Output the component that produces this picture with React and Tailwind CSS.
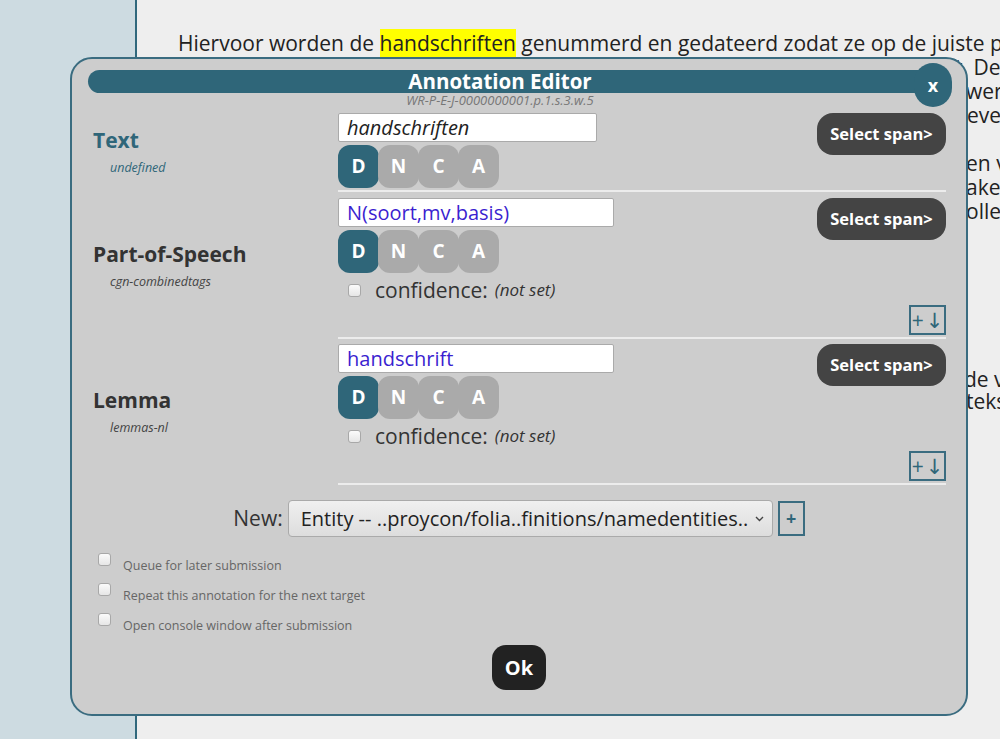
import React from 'react';

const FONT = { fontFamily: '"Open Sans", "DejaVu Sans", sans-serif' };

// only the line ends that stick out to the right of the dialog are visible
const bgLines = [
  { w: 'w-[770px]', tail: 'ft.  De brieven' },
  { w: 'w-[788px]', tail: 'werken' },
  { w: 'w-[789px]', tail: 'eventueel' },
  { w: 'w-[788px]', tail: '' },
  { w: 'w-[788px]', tail: 'en v' },
  { w: 'w-[788px]', tail: 'aken' },
  { w: 'w-[788px]', tail: 'ollectie' },
  { w: 'w-[788px]', tail: '' },
  { w: 'w-[788px]', tail: '' },
  { w: 'w-[788px]', tail: '' },
  { w: 'w-[788px]', tail: '' },
  { w: 'w-[788px]', tail: '' },
  { w: 'w-[788px]', tail: '' },
  { w: 'w-[786px]', tail: 'de v', h: 'h-[22px]' },
  { w: 'w-[788px]', tail: 'teks', h: 'h-[22px]' },
];

function Checkbox({ className = '' }) {
  return (
    <span className={`inline-block shrink-0 w-[13px] h-[13px] rounded-[3px] border border-[#a8a8a8] bg-gradient-to-b from-[#fbfbfb] to-[#e6e6e6] ${className}`} />
  );
}

function Dnca() {
  return (
    <div className="flex mt-[3px]">
      {['D', 'N', 'C', 'A'].map((l, i) => (
        <div
          key={l}
          className={`w-[41px] h-[43px] rounded-[12px] flex items-center justify-center text-white font-bold text-[19px] ${i === 0 ? 'bg-[#2f6679]' : 'bg-[#aaaaaa] -ml-[1px]'}`}
        >
          {l}
        </div>
      ))}
    </div>
  );
}

function SelectSpan() {
  return (
    <div className="w-[129px] h-[42px] rounded-[16px] bg-[#444444] text-white font-bold text-[16.5px] flex items-center justify-center">
      Select span&gt;
    </div>
  );
}

function PlusDown() {
  return (
    <div className="self-end w-[37px] h-[30px] border-2 border-[#3a6c80] flex items-center justify-center text-[#2f6679] text-[21px] leading-none">
      +<span className="ml-[2px]">↓</span>
    </div>
  );
}

function Confidence({ className = '' }) {
  return (
    <div className={`flex items-center h-[22px] pl-[10px] ${className}`}>
      <Checkbox />
      <span className="ml-[14px] text-[21px] leading-[22px] text-[#333]">confidence:</span>
      <span className="ml-[7px] text-[17px] leading-[22px] italic text-[#333]">(not set)</span>
    </div>
  );
}

function Row({ label, set, labelColor, setColor, input, inputW, inputItalic, inputColor, first, pt }) {
  return (
    <div className="flex">
      <div className="w-[266px] shrink-0 pl-[21px] flex flex-col justify-center">
        <div className={`text-[21px] font-bold leading-[24px] ${labelColor}`}>{label}</div>
        <div className={`pl-[17px] mt-[8px] text-[12.5px] italic leading-[16px] ${setColor}`}>{set}</div>
      </div>
      <div className={`w-[608px] flex flex-col border-b-2 border-[#ececec] pb-[2px] ${pt}`}>
        <div className="flex justify-between items-start">
          <div className="flex flex-col">
            <div className={`h-[29px] ${inputW} bg-white border border-[#aaaaaa] rounded-[2px] px-[8px] flex items-center text-[20px] leading-[27px] ${inputItalic ? 'italic' : ''} ${inputColor}`}>
              {input}
            </div>
            <Dnca />
          </div>
          <SelectSpan />
        </div>
        {!first && (
          <>
            <Confidence className="mt-[6px]" />
            <div className="flex justify-end mt-[4px]">
              <PlusDown />
            </div>
          </>
        )}
      </div>
    </div>
  );
}

export default function App() {
  return (
    <div className="relative w-[1000px] h-[739px] overflow-hidden flex bg-[#eeeeee]" style={FONT}>
      <div className="w-[137px] shrink-0 bg-[#cddbe1] border-r-2 border-[#30687c]" />
      <div className="flex-1 pl-[41px] pt-[31px] text-[21px] leading-[24px] text-[#222] overflow-hidden">
        <div className="whitespace-nowrap">
          Hiervoor worden de <span className="bg-[#ffff00]">handschriften</span> genummerd en gedateerd zodat ze op de juiste plaats
        </div>
        {bgLines.map((l, i) => (
          <div key={i} className={`flex whitespace-nowrap ${l.h || 'h-[24px]'}`}>
            <span className={`${l.w} shrink-0`} />
            <span>{l.tail}</span>
          </div>
        ))}
      </div>

      {/* Annotation editor dialog */}
      <div className="absolute left-[70px] top-[57px] w-[898px] h-[659px] rounded-[22px] border-2 border-[#3a6c80] bg-[#cdcdcd] flex flex-col">
        <div className="relative mt-[11px] mx-[16px] h-[23px] rounded-full bg-[#2f6679] pr-[38px] flex items-center justify-center">
          <span className="text-white font-bold text-[20.5px] leading-none">Annotation Editor</span>
          <div className="absolute right-[-2px] top-[-7px] w-[38px] h-[44px] rounded-[20px] bg-[#2f6679] flex items-center justify-center text-white font-bold text-[18px]">
            x
          </div>
        </div>
        <div className="pr-[38px] text-center text-[13px] leading-[14px] italic text-[#777] mb-[5px]">
          WR-P-E-J-0000000001.p.1.s.3.w.5
        </div>

        <Row
          first
          pt="pt-[1px]"
          label="Text"
          set="undefined"
          labelColor="text-[#2f6679]"
          setColor="text-[#2f6679]"
          input="handschriften"
          inputW="w-[259px]"
          inputItalic
          inputColor="text-[#222]"
        />
        <Row
          pt="pt-[6px]"
          label="Part-of-Speech"
          set="cgn-combinedtags"
          labelColor="text-[#333]"
          setColor="text-[#444]"
          input="N(soort,mv,basis)"
          inputW="w-[276px]"
          inputColor="text-[#3b1fd0]"
        />
        <Row
          pt="pt-[5px]"
          label="Lemma"
          set="lemmas-nl"
          labelColor="text-[#333]"
          setColor="text-[#444]"
          input="handschrift"
          inputW="w-[276px]"
          inputColor="text-[#3b1fd0]"
        />

        <div className="mt-[15px] flex items-center justify-center h-[37px]">
          <span className="text-[21px] text-[#333] mr-[5px]">New:</span>
          <div className="w-[485px] h-[37px] rounded-[4px] border border-[#aaaaaa] bg-gradient-to-b from-[#f0f0f0] to-[#dddddd] flex items-center pl-[12px] pr-[8px] text-[20px] text-[#222]">
            <span className="flex-1 whitespace-nowrap overflow-hidden">Entity -- ..proycon/folia..finitions/namedentities..</span>
            <svg width="9" height="6" viewBox="0 0 9 6" className="ml-[6px]">
              <path d="M1 1 L4.5 4.5 L8 1" fill="none" stroke="#444" strokeWidth="1.4" />
            </svg>
          </div>
          <div className="ml-[5px] w-[27px] h-[35px] border-2 border-[#3a6c80] flex items-center justify-center text-[#2f6679] font-bold text-[18px]">
            +
          </div>
        </div>

        <div className="mt-[14px] pl-[26px] flex flex-col">
          {['Queue for later submission', 'Repeat this annotation for the next target', 'Open console window after submission'].map((t) => (
            <div key={t} className="flex items-start h-[30px]">
              <Checkbox className="mt-[2px]" />
              <span className="ml-[12px] mt-[7px] text-[12.5px] leading-[16px] text-[#666]">{t}</span>
            </div>
          ))}
        </div>

        <div className="mt-[4px] flex justify-center">
          <div className="w-[54px] h-[45px] rounded-[14px] bg-[#222222] text-white font-bold text-[20px] flex items-center justify-center">
            Ok
          </div>
        </div>
      </div>
    </div>
  );
}
